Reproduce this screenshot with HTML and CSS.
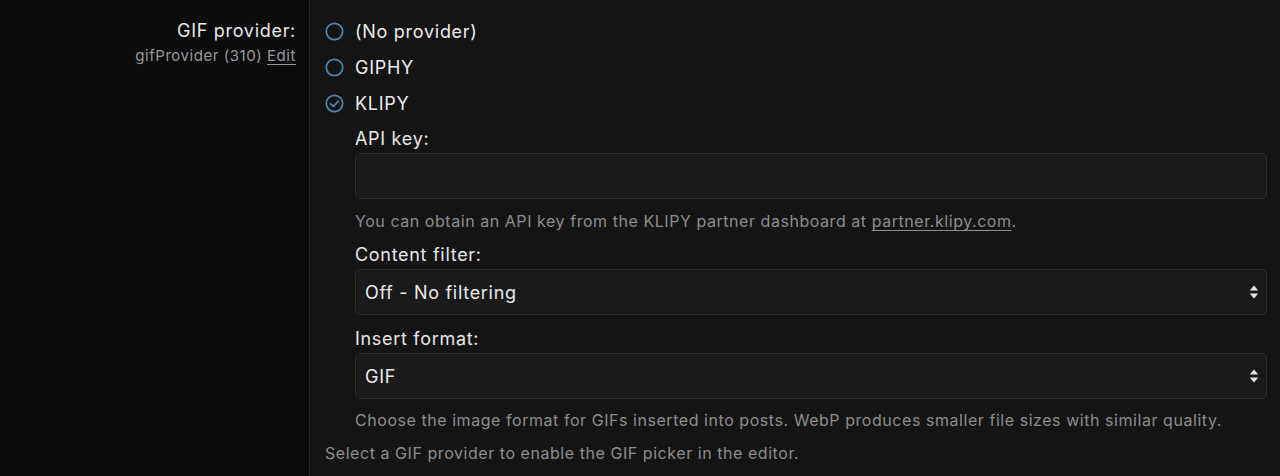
FILE: index.html
```html
<!DOCTYPE html>
<html lang="en">
<head>
<meta charset="utf-8">
<title>GIF provider</title>
<link rel="stylesheet" href="styles.css">
</head>
<body>
<div class="setting">
  <div class="label-col">
    <div class="label">GIF provider:</div>
    <div class="sublabel">gifProvider (310) <a class="edit" href="#">Edit</a></div>
  </div>
  <div class="value-col">
    <div class="radio-row">
      <svg class="radio" width="19" height="19" viewBox="0 0 19 19"><circle cx="9.5" cy="9.5" r="8.2" fill="none" stroke="#4f86b4" stroke-width="1.7"/></svg>
      <span>(No provider)</span>
    </div>
    <div class="radio-row">
      <svg class="radio" width="19" height="19" viewBox="0 0 19 19"><circle cx="9.5" cy="9.5" r="8.2" fill="none" stroke="#4f86b4" stroke-width="1.7"/></svg>
      <span>GIPHY</span>
    </div>
    <div class="radio-row">
      <svg class="radio" width="19" height="19" viewBox="0 0 19 19"><circle cx="9.5" cy="9.5" r="8.2" fill="none" stroke="#4f86b4" stroke-width="1.7"/><path d="M5.6 9.8 L8.3 12.4 L13.4 7.1" fill="none" stroke="#4f86b4" stroke-width="1.8" stroke-linecap="round" stroke-linejoin="round"/></svg>
      <span>KLIPY</span>
    </div>
    <div class="sub-options">
      <div class="field-label">API key:</div>
      <div class="input"></div>
      <div class="help">You can obtain an API key from the KLIPY partner dashboard at <a class="link" href="#">partner.klipy.com</a>.</div>
      <div class="field-label spaced">Content filter:</div>
      <div class="select">
        <span>Off - No filtering</span>
        <svg width="10" height="16" viewBox="0 0 10 16"><path d="M5 1.5 L9.2 6.6 H0.8 Z M5 14.5 L9.2 9.4 H0.8 Z" fill="#e6e6e6"/></svg>
      </div>
      <div class="field-label spaced2">Insert format:</div>
      <div class="select">
        <span>GIF</span>
        <svg width="10" height="16" viewBox="0 0 10 16"><path d="M5 1.5 L9.2 6.6 H0.8 Z M5 14.5 L9.2 9.4 H0.8 Z" fill="#e6e6e6"/></svg>
      </div>
      <div class="help last">Choose the image format for GIFs inserted into posts. WebP produces smaller file sizes with similar quality.</div>
    </div>
    <div class="help bottom">Select a GIF provider to enable the GIF picker in the editor.</div>
  </div>
</div>
</body>
</html>
```

FILE: styles.css
```css
html, body {
  margin: 0;
  padding: 0;
  height: 100%;
  background: #0b0b0b;
}
body {
  font-family: Inter, "Noto Sans", "Liberation Sans", sans-serif;
  color: #e6e6e6;
}
.setting {
  display: flex;
  min-height: 476px;
}
.label-col {
  width: 296px;
  padding-right: 13px;
  padding-top: 19px;
  text-align: right;
  background: #0b0b0b;
  border-right: 1px solid #262626;
}
.label {
  font-size: 18px;
  line-height: 24px;
  letter-spacing: 0.7px;
  color: #e8e8e8;
}
.sublabel {
  font-size: 15px;
  line-height: 24px;
  letter-spacing: 0.55px;
  color: #9a9a9a;
  margin-top: 1px;
}
.edit {
  color: #9a9a9a;
  text-decoration: underline;
  text-underline-offset: 3px;
}
.value-col {
  flex: 1;
  background: #141414;
  padding: 13px 13px 0 15px;
}
.radio-row {
  display: flex;
  align-items: center;
  gap: 11px;
  height: 36px;
  font-size: 18px;
  letter-spacing: 0.72px;
  color: #ececec;
}
.radio {
  flex: none;
}
.sub-options {
  padding-left: 30px;
  padding-top: 6px;
}
.field-label {
  font-size: 18px;
  line-height: 24px;
  letter-spacing: 0.7px;
  color: #e8e8e8;
  margin-bottom: 2px;
}
.field-label.spaced {
  margin-top: 10px;
}
.field-label.spaced2 {
  margin-top: 12px;
}
.input, .select {
  box-sizing: border-box;
  height: 46px;
  background: #1a1a1a;
  border: 1px solid #2e2e2e;
  border-radius: 5px;
}
.select {
  display: flex;
  align-items: center;
  justify-content: space-between;
  padding: 0 7px 0 9px;
  font-size: 18px;
  letter-spacing: 0.7px;
  color: #ececec;
}
.help {
  font-size: 16px;
  line-height: 24px;
  letter-spacing: 0.55px;
  color: #8e8e8e;
  margin-top: 10px;
}
.help.last {
  margin-top: 9px;
}
.help.bottom {
  margin-top: 9px;
}
.link {
  color: #8e8e8e;
  text-decoration: underline;
  text-underline-offset: 3px;
}
```
